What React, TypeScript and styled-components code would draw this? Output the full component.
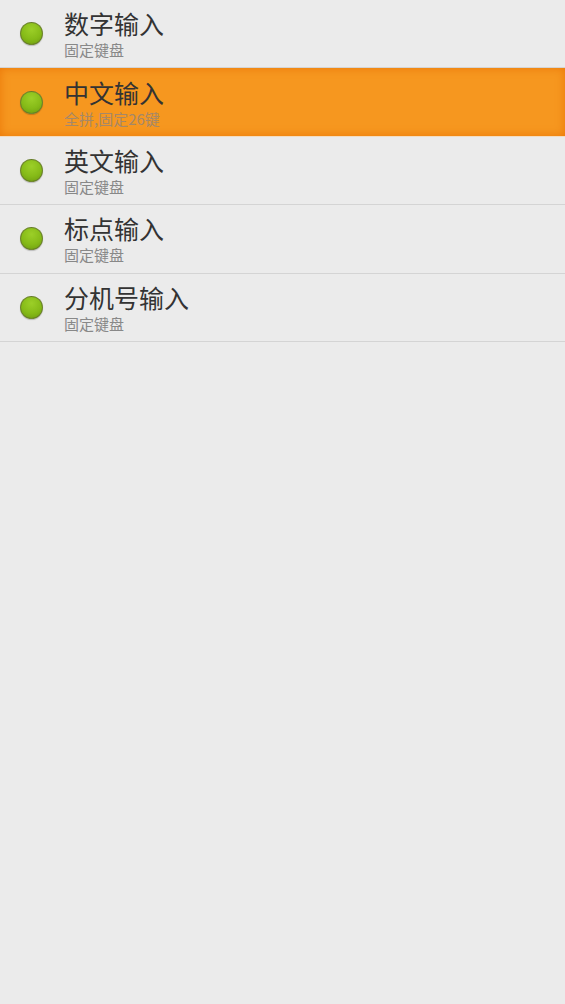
import styled, { createGlobalStyle } from 'styled-components';

const GlobalStyle = createGlobalStyle`
  html, body {
    margin: 0;
    padding: 0;
    background: #ebebeb;
  }
  body {
    font-family: "Noto Sans CJK SC", "Noto Sans", sans-serif;
  }
`;

const Page = styled.div`
  min-height: 1004px;
  background: #ebebeb;
`;

const List = styled.ul`
  list-style: none;
  margin: 0;
  padding: 0;
`;

const Row = styled.li<{ $selected: boolean }>`
  display: flex;
  align-items: center;
  gap: 21px;
  height: 67.4px;
  padding-left: 20px;
  border-bottom: 1px solid ${({ $selected }) => ($selected ? '#f3dcc0' : '#d4d4d4')};
  background: ${({ $selected }) => ($selected ? '#f6971f' : 'transparent')};
  box-shadow: ${({ $selected }) =>
    $selected ? 'inset 0 0 10px rgba(232, 110, 0, 0.75)' : 'none'};
`;

const Dot = styled.span`
  flex-shrink: 0;
  width: 21px;
  height: 21px;
  border-radius: 50%;
  background: radial-gradient(circle at 50% 30%, #9ccf28 0%, #86bb18 55%, #6c9a0e 100%);
  border: 1px solid rgba(90, 90, 60, 0.55);
  box-shadow: 0 1px 1px rgba(0, 0, 0, 0.2);
`;

const Texts = styled.div`
  display: flex;
  flex-direction: column;
`;

const Title = styled.span`
  font-size: 25px;
  line-height: 30px;
  color: #333333;
`;

const Subtitle = styled.span<{ $selected: boolean }>`
  margin-top: 3px;
  font-size: 15px;
  line-height: 18px;
  color: ${({ $selected }) => ($selected ? '#a58868' : '#888888')};
`;

const items = [
  { title: '数字输入', sub: '固定键盘' },
  { title: '中文输入', sub: '全拼,固定26键', selected: true },
  { title: '英文输入', sub: '固定键盘' },
  { title: '标点输入', sub: '固定键盘' },
  { title: '分机号输入', sub: '固定键盘' },
];

export default function App() {
  return (
    <Page>
      <GlobalStyle />
      <List>
        {items.map((item) => (
          <Row key={item.title} $selected={!!item.selected}>
            <Dot />
            <Texts>
              <Title>{item.title}</Title>
              <Subtitle $selected={!!item.selected}>{item.sub}</Subtitle>
            </Texts>
          </Row>
        ))}
      </List>
    </Page>
  );
}
